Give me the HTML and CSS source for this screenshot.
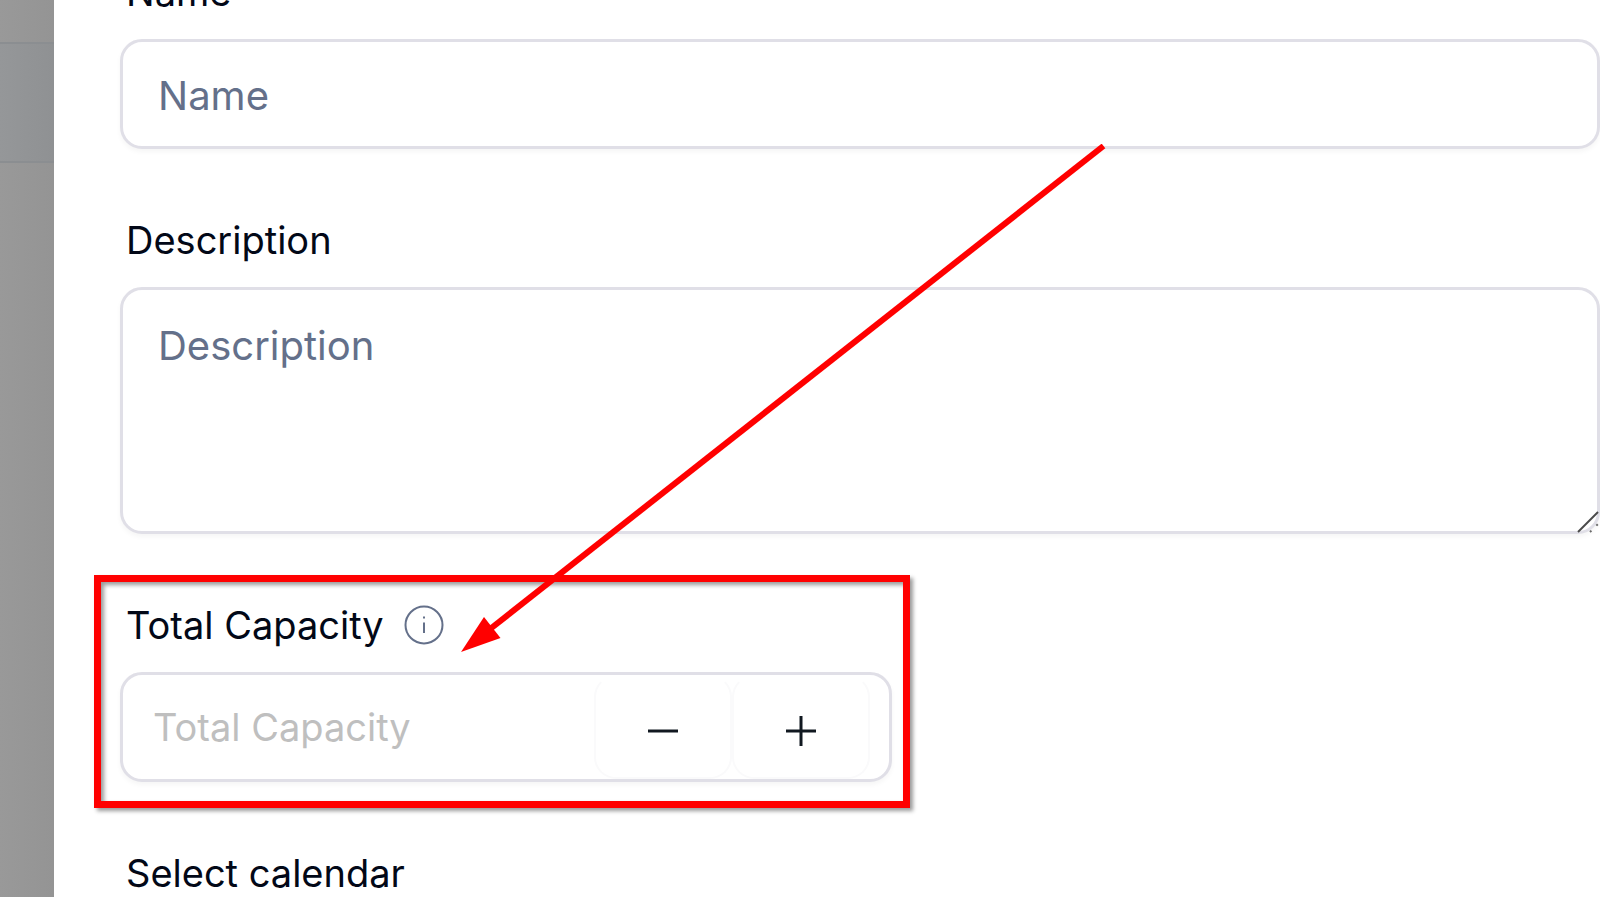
FILE: index.html
```html
<!DOCTYPE html>
<html lang="en">
<head>
    <meta charset="UTF-8">
    <meta name="viewport" content="width=device-width, initial-scale=1.0">
    <title>Total Capacity</title>
    <link rel="stylesheet" href="styles.css">
</head>
<body>
    <div class="backdrop">
        <div class="backdrop-row"></div>
    </div>
    <main class="panel">
        <form class="form">
            <div class="field">
                <label for="name">Name</label>
                <input type="text" id="name" class="control" placeholder="Name">
            </div>

            <div class="field">
                <label for="description">Description</label>
                <div class="textarea-wrap">
                    <textarea id="description" class="control" placeholder="Description"></textarea>
                    <svg class="grip" viewBox="0 0 24 24">
                        <path d="M2 22L22 2" stroke="#4a4a4a" stroke-width="2"/>
                        <path d="M14 22L22 14" stroke="#6a6a6a" stroke-width="2" stroke-dasharray="2 7"/>
                    </svg>
                </div>
            </div>

            <div class="field capacity">
                <div class="label-row">
                    <label for="capacity">Total Capacity</label>
                    <svg class="info" viewBox="0 0 40 40">
                        <circle cx="20" cy="20" r="18.500"/>
                        <path d="M20 17.500V28M20 11.500V13.500"/>
                    </svg>
                </div>
                <div class="control stepper">
                    <input type="text" id="capacity" inputmode="numeric" placeholder="Total Capacity">
                    <button type="button" aria-label="Decrease">
                        <svg viewBox="0 0 32 32"><path d="M1 16H31"/></svg>
                    </button>
                    <button type="button" aria-label="Increase">
                        <svg viewBox="0 0 32 32"><path d="M1 16H31M16 1V31"/></svg>
                    </button>
                </div>
                <div class="highlight"></div>
                <svg class="arrow" viewBox="0 0 650 510">
                    <path d="M642.500 2L24 489" stroke="#f00" stroke-width="6"/>
                    <path d="M0 508L23 473L39.500 494Z" fill="#f00"/>
                </svg>
            </div>

            <div class="field">
                <label for="calendar">Select calendar</label>
                <select id="calendar" class="control"></select>
            </div>
        </form>
    </main>
</body>
</html>
```
FILE: styles.css
```css
* {
    box-sizing: border-box;
}

body {
    margin: 0;
    height: 100vh;
    display: flex;
    overflow: hidden;
    font-family: Inter, "Liberation Sans", sans-serif;
    color: #020817;
    background-color: #fff;
}

.backdrop {
    width: 54px;
    flex-shrink: 0;
    padding-top: 42px;
    background: linear-gradient(to right, #999, #949494);
}

.backdrop-row {
    height: 121px;
    border-top: 2px solid #8b8e91;
    border-bottom: 2px solid #8b8e91;
    background: linear-gradient(to right, #959799, #8f9193);
}

.panel {
    flex: 1;
    min-width: 0;
    height: 100vh;
    overflow: hidden;
    background-color: #fff;
}

/* the form is scrolled down a little inside the panel */
.form {
    display: flex;
    flex-direction: column;
    gap: 71px;
    margin-top: -28px;
    padding: 0 0 0 66px;
}

.field {
    display: flex;
    flex-direction: column;
    gap: 27px;
}

label {
    padding-left: 6px;
    font-size: 38px;
    line-height: 40px;
}

.control {
    width: 100%;
    height: 110px;
    padding: 3px 35px 0;
    border: 3px solid #e0dfe7;
    border-radius: 22px;
    background-color: #fff;
    box-shadow: 0 3px 5px rgba(0, 0, 0, 0.04);
    font-family: inherit;
    font-size: 40px;
    color: inherit;
    outline: none;
}

.control::placeholder {
    color: #64708a;
    opacity: 1;
}

.textarea-wrap {
    position: relative;
}

textarea.control {
    display: block;
    height: 247px;
    padding-top: 26px;
    line-height: 60px;
    resize: none;
}

.grip {
    position: absolute;
    right: 0;
    bottom: 0;
    width: 24px;
    height: 24px;
    fill: none;
}

.capacity {
    position: relative;
    width: 772px;
    max-width: 100%;
}

.label-row {
    display: flex;
    align-items: center;
    gap: 20px;
}

.info {
    width: 40px;
    height: 40px;
    fill: none;
    stroke: #64708a;
    stroke-width: 2;
}

.stepper {
    display: flex;
    padding: 0 19px 0 30px;
}

.stepper input {
    flex: 1;
    min-width: 0;
    padding: 0;
    border: none;
    outline: none;
    background: none;
    font-family: inherit;
    font-size: 38px;
    color: inherit;
}

.stepper input::placeholder {
    color: #bfbfbf;
    opacity: 1;
}

.stepper button {
    display: flex;
    justify-content: center;
    align-items: center;
    width: 138px;
    padding: 8px 0 0;
    border: 2px solid #fafafb;
    border-top-color: transparent;
    border-radius: 22px;
    background: none;
    cursor: pointer;
}

.stepper svg {
    width: 32px;
    height: 32px;
    fill: none;
    stroke: #111820;
    stroke-width: 3;
}

.highlight {
    position: absolute;
    top: -30px;
    right: -18px;
    bottom: -26px;
    left: -26px;
    border: 7px solid #f00;
    box-shadow: 3px 3px 4px rgba(0, 0, 0, 0.4), inset 3px 3px 4px rgba(0, 0, 0, 0.4);
    pointer-events: none;
}

.arrow {
    position: absolute;
    top: -461px;
    left: 341px;
    width: 650px;
    height: 510px;
    fill: none;
    pointer-events: none;
}
```
